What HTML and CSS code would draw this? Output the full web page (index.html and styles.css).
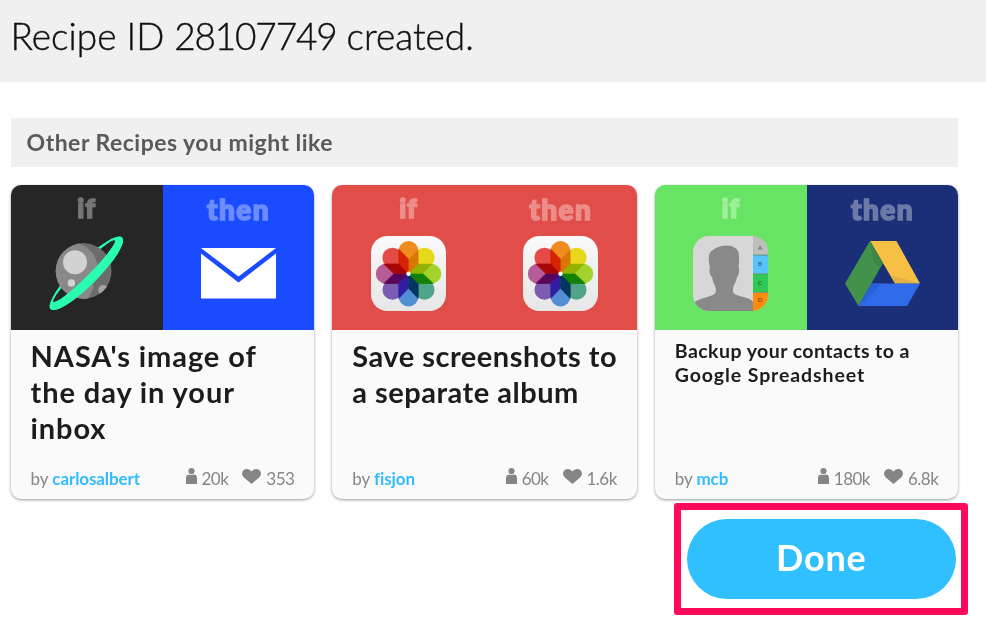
FILE: index.html
```
<!DOCTYPE html>
<html lang="en">
<head>
<meta charset="utf-8">
<title>Recipe created</title>
<link rel="stylesheet" href="styles.css">
</head>
<body>
<svg class="defs" width="0" height="0" aria-hidden="true">
  <defs>
    <linearGradient id="tile" x1="0" y1="0" x2="0" y2="1"><stop offset="0" stop-color="#fafafa"/><stop offset="1" stop-color="#e6e6e6"/></linearGradient>
    <clipPath id="planet-clip"><circle cx="34.7" cy="35" r="28"/></clipPath>
    <clipPath id="front-clip"><rect x="-52" y="-3" width="104" height="16"/></clipPath>
    <clipPath id="contact-clip"><rect width="75" height="75" rx="16"/></clipPath>
    <path id="ring" fill-rule="evenodd" d="M-50.500 0A50.500 11.8 0 0 1 50.500 0A50.500 11.8 0 0 1 -50.500 0ZM-43.5 -3A43.5 5.400 0 0 0 43.5 -3A43.5 5.400 0 0 0 -43.5 -3Z"/>
    <path id="petal" d="M-10 -22.700A10 10 0 0 1 10 -22.700V-10L0 0L-10 -10Z"/>
    <symbol id="photos" viewBox="0 0 75 75">
      <rect width="75" height="75" rx="16.5" fill="url(#tile)"/>
      <g class="petals" transform="translate(37.5 37.7)">
        <use href="#petal" fill="#f08c1e"/>
        <use href="#petal" fill="#e8d81c" transform="rotate(45)"/>
        <use href="#petal" fill="#a4d22c" transform="rotate(90)"/>
        <use href="#petal" fill="#50a488" transform="rotate(135)"/>
        <use href="#petal" fill="#528ed4" transform="rotate(180)"/>
        <use href="#petal" fill="#7c5cb0" transform="rotate(225)"/>
        <use href="#petal" fill="#b85c98" transform="rotate(270)"/>
        <use href="#petal" fill="#e64a46" transform="rotate(315)"/>
      </g>
      <g class="petals" transform="translate(37.5 37.7)">
        <path fill="#d42000" d="M-10 -25.500V-10L0 0V-15Z" opacity=".75"/>
        <path fill="#a80000" d="M-25.500 -10H-10L0 0H-15Z" opacity=".8"/>
        <path fill="#560058" d="M-25.500 10H-10L0 0H-15Z" opacity=".8"/>
        <path fill="#3418a8" d="M-10 25.500V10L0 0V15Z" opacity=".8"/>
        <path fill="#00305c" d="M10 25.500V10L0 0V15Z" opacity=".85"/>
        <path fill="#0e8000" d="M25.500 10H10L0 0H15Z" opacity=".85"/>
      </g>
      <circle cx="37.5" cy="37.7" r="2.2" fill="#fff"/>
    </symbol>
    <symbol id="person" viewBox="0 0 11 16"><circle cx="5.5" cy="3.1" r="3.1"/><path d="M0 16V10.5Q0 6.4 3.4 6.4Q5.5 7.4 7.6 6.4Q11 6.4 11 10.5V16Z"/></symbol>
    <symbol id="heart" viewBox="0 0 19 15"><path d="M9.5 15L1.6 8.2C-.6 6 -.2 2.7 1.5 1.2C4 -.9 7.6 -.1 9.5 2.6C11.4 -.1 15 -.9 17.5 1.2C19.2 2.7 19.6 6 17.4 8.2Z"/></symbol>
  </defs>
</svg>

<header class="banner"><h1>Recipe ID <span class="id">28107749</span> created.</h1></header>

<main class="content">
  <h2 class="section-title"><span>Other Recipes you might like</span></h2>

  <div class="cards">
    <article class="card">
      <div class="channels">
        <div class="half space">
          <span class="word if">if</span>
          <svg class="icon" viewBox="0 0 75 75">
            <use href="#ring" fill="#2bfdb0" transform="translate(37.3 37.3) rotate(-45)"/>
            <g clip-path="url(#planet-clip)">
              <circle cx="34.7" cy="35" r="28" fill="#6c6c6c"/>
              <circle cx="21.8" cy="33" r="26.8" fill="#898989"/>
              <path d="M0 34H30L45 50L36 70H0Z" fill="#898989"/>
              <circle cx="26" cy="26.2" r="12" fill="#d2d2d2"/>
              <circle cx="22.4" cy="47" r="3.7" fill="#d2d2d2"/>
              <circle cx="54.3" cy="54" r="5" fill="#a3a3a3"/>
            </g>
            <g transform="translate(37.3 37.3) rotate(-45)"><use href="#ring" fill="#2bfdb0" clip-path="url(#front-clip)"/></g>
          </svg>
        </div>
        <div class="half mail">
          <span class="word">then</span>
          <svg class="icon" viewBox="0 0 75 75"><path fill="#fff" d="M0 12H75L37.5 40.5ZM0 17.5L37.5 46.5L75 17.5V62.5H0Z"/></svg>
        </div>
      </div>
      <div class="body">
        <h3 class="name wide">NASA's image of<br>the day in your<br>inbox</h3>
        <footer class="meta">
          <span>by <a class="author">carlosalbert</a></span>
          <span class="stats"><svg class="person"><use href="#person"/></svg><span>20k</span><svg class="heart"><use href="#heart"/></svg><span>353</span></span>
        </footer>
      </div>
    </article>

    <article class="card">
      <div class="channels">
        <div class="half photos"><span class="word if">if</span><svg class="icon"><use href="#photos"/></svg></div>
        <div class="half photos"><span class="word">then</span><svg class="icon"><use href="#photos"/></svg></div>
      </div>
      <div class="body">
        <h3 class="name">Save screenshots to<br>a separate album</h3>
        <footer class="meta">
          <span>by <a class="author">fisjon</a></span>
          <span class="stats"><svg class="person"><use href="#person"/></svg><span>60k</span><svg class="heart"><use href="#heart"/></svg><span>1.6k</span></span>
        </footer>
      </div>
    </article>

    <article class="card">
      <div class="channels">
        <div class="half contacts">
          <span class="word if">if</span>
          <svg class="icon" viewBox="0 0 75 75">
            <g clip-path="url(#contact-clip)">
              <rect width="75" height="75" fill="#d7d7d7"/>
              <path fill="#898989" d="M0 68C4 62 18 61 21.500 58C24 55 22.500 53 22 50C20 46 19.500 43 19 41C16.500 40 16 33 17 31.500C15 23 15 16 20 14C26 9 37 8 42 12C47 14 46.500 24 45.500 31.500C47 33 46 40 44 41C43.500 44 42.500 47 40.500 50C40 53 39 56 41.500 58C46 61 57 61 60 66V75H0Z"/>
              <rect x="60" width="15" height="18.500" fill="#bebebb"/>
              <rect x="60" y="19" width="15" height="18.500" fill="#58c4fc"/>
              <rect x="60" y="38" width="15" height="18" fill="#30c856"/>
              <rect x="60" y="56.500" width="15" height="18.500" fill="#ff8a10"/>
              <path d="M60 19H75M60 37.800H75M60 56.300H75" stroke="#54866a" stroke-width=".8"/>
              <g class="tabs"><text x="67" y="13.500">A</text><text x="67" y="30">B</text><text x="67" y="48.500">C</text><text x="67" y="65.500">D</text></g>
            </g>
          </svg>
        </div>
        <div class="half drive">
          <span class="word">then</span>
          <svg class="icon" viewBox="0 0 75 75">
            <path fill="#f6c045" d="M25 5H51.500L75 47.500H50Z"/>
            <path fill="#dfb043" d="M47 39.500L75 47.500H50Z"/>
            <path fill="#43924b" d="M25 5L37.800 27.500L13.500 70L0 47.500Z"/>
            <path fill="#3c8744" d="M25 5L37.800 27.500L35.500 31.500L29 27Z"/>
            <path fill="#2f6ae8" d="M26.500 47.500H75L62 70H13.500Z"/>
            <path fill="#2a60d6" d="M26.500 47.500H37L13.500 70Z"/>
          </svg>
        </div>
      </div>
      <div class="body">
        <h3 class="name small">Backup your contacts to a<br><span class="second">Google Spreadsheet</span></h3>
        <footer class="meta">
          <span>by <a class="author">mcb</a></span>
          <span class="stats"><svg class="person"><use href="#person"/></svg><span>180k</span><svg class="heart"><use href="#heart"/></svg><span>6.8k</span></span>
        </footer>
      </div>
    </article>
  </div>

  <div class="highlight"><button class="done" type="button">Done</button></div>
</main>
</body>
</html>
```
FILE: styles.css
```
* { box-sizing: border-box; }
body { margin: 0; background: #fff; font-family: Lato, "Liberation Sans", sans-serif; color: #1c1c1c; overflow: hidden; }
h1, h2, h3 { margin: 0; }
.defs { display: block; height: 0; }
.banner { height: 82px; background: #f0f0f0; padding: 13px 0 0 10.5px; }
.banner h1 { font-size: 37px; line-height: 46px; font-weight: 300; letter-spacing: 0; color: #111; white-space: nowrap; -webkit-text-stroke: .4px #111; }
.banner .id { letter-spacing: -1.2px; }
.content { width: 947.800px; margin: 36px 0 0 10.600px; }
.section-title { height: 49px; padding-left: 16px; background: #f0f0f0; font-size: 23px; line-height: 48px; font-weight: 700; letter-spacing: .48px; color: #5a5a5a; }
.cards { display: grid; grid-template-columns: 303.800px 304.600px 303.600px; gap: 17.900px; margin-top: 18px; }
.card { height: 314px; display: flex; flex-direction: column; border-radius: 10px; overflow: hidden; background: #fafafa; box-shadow: 0 1px 3px rgba(0, 0, 0, .4); }
.channels { display: flex; height: 144.500px; }
.half { flex: 1; display: flex; flex-direction: column; align-items: center; }
.space { background: #262626; }
.mail { background: #1b4bff; }
.photos { background: #e14d49; }
.contacts { background: #68e464; }
.drive { background: #1b2f78; }
.word { height: 51px; padding-top: 6px; font-size: 28px; line-height: 36px; font-weight: 900; letter-spacing: 1.4px; color: #fff; -webkit-text-stroke: 1.600px #fff; opacity: .36; }
.word.if { padding-top: 5px; font-size: 27px; letter-spacing: .8px; }
.icon { width: 75px; height: 75px; display: block; }
.petals { isolation: isolate; }
.petals use { mix-blend-mode: multiply; }
.tabs { font: 700 6px Lato, sans-serif; text-anchor: middle; fill: rgba(0, 0, 0, .5); }
.body { flex: 1; display: flex; flex-direction: column; justify-content: space-between; padding: 8px 20px 9.500px; }
.name { font-size: 29px; line-height: 36px; font-weight: 700; letter-spacing: .5px; white-space: nowrap; }
.name.wide { letter-spacing: .9px; }
.name.small { padding-top: 1px; font-size: 19.500px; line-height: 24px; letter-spacing: .45px; }
.second { letter-spacing: .9px; }
.meta { display: flex; justify-content: space-between; font-size: 17px; line-height: 22px; letter-spacing: -.1px; color: #858585; }
.author { color: #33bbff; font-weight: 700; }
.stats { display: flex; letter-spacing: -.5px; }
.person { width: 11px; height: 16px; margin: 0 4.500px 0 0; fill: #858585; }
.heart { width: 19px; height: 15px; margin: 1px 5px 0 14px; fill: #858585; }
.highlight { width: 294px; height: 112px; margin: 4px 0 0 663.700px; padding: 9px 0 0 5.500px; border: 7px solid #ff0a5b; border-radius: 3px; }
.done { display: block; width: 269px; height: 80px; border: 0; border-radius: 40px; padding: 0 0 3px; background: #30c0ff; color: #fff; font: 700 36px/77px Lato, sans-serif; letter-spacing: .8px; }
```
